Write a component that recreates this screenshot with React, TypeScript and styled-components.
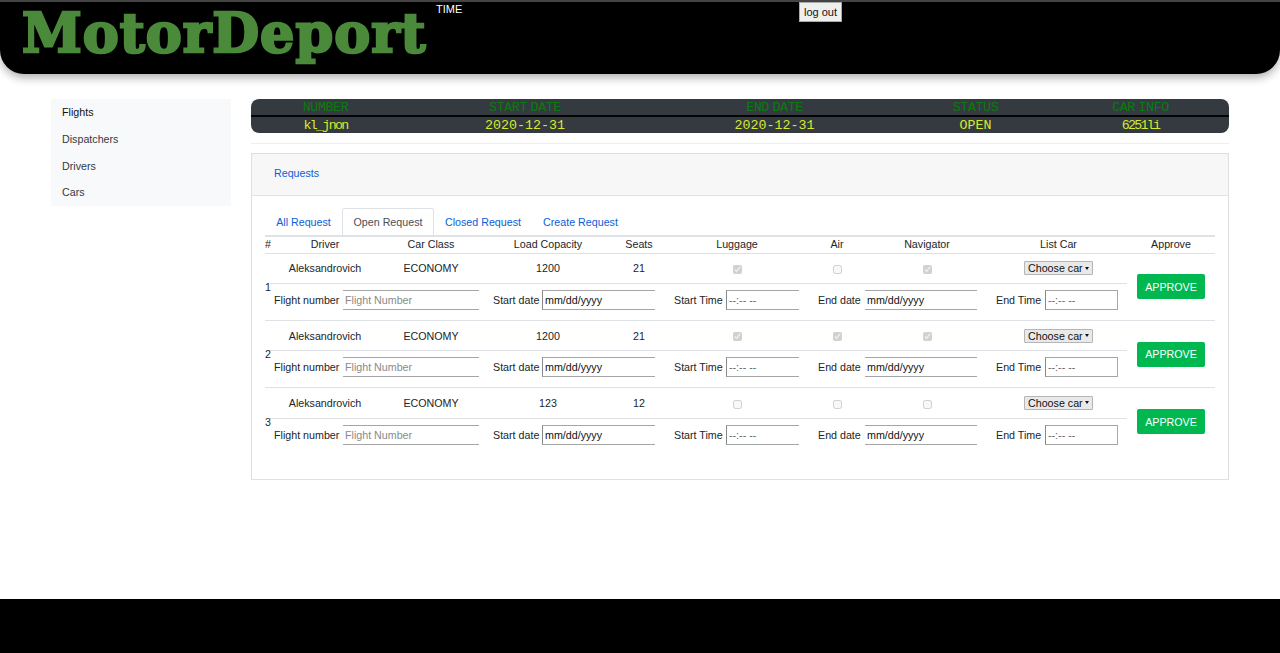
import React from 'react';
import styled, { createGlobalStyle } from 'styled-components';

const GlobalStyle = createGlobalStyle`
  html, body {
    margin: 0;
    padding: 0;
    background: #fff;
  }
  body {
    font-family: "Liberation Sans", Arial, sans-serif;
    font-size: 10.7px;
    color: #212529;
  }
`;

const Page = styled.div`
  min-height: 653px;
  display: flex;
  flex-direction: column;
  overflow: hidden;
`;

const Header = styled.header`
  height: 72px;
  background: #000;
  border-top: 2px solid #444;
  border-radius: 0 0 24px 24px;
  box-shadow: 0 4px 8px rgba(0, 0, 0, 0.3);
  display: flex;
  align-items: flex-start;
`;

const Logo = styled.div`
  width: 414px;
  margin-left: 22px;
  font-family: "DejaVu Serif", serif;
  font-weight: 700;
  font-size: 54px;
  line-height: 62px;
  letter-spacing: 1px;
  color: #4a8a3a;
  -webkit-text-stroke: 2.5px #4a8a3a;
  white-space: nowrap;
`;

const TimeLabel = styled.div`
  width: 363px;
  margin-top: 1px;
  color: #fff;
  font-size: 11px;
  line-height: 13px;
`;

const LogoutButton = styled.button`
  width: 43px;
  height: 20px;
  padding: 0;
  background: #efefef;
  border: 1px solid #aaa;
  color: #111;
  font-family: inherit;
  font-size: 11px;
`;

const Main = styled.main`
  display: flex;
  align-items: flex-start;
  gap: 20px;
  padding: 25px 51px 0;
`;

const Sidebar = styled.nav`
  width: 180px;
  flex: none;
  background: #f8f9fa;
`;

const SideItem = styled.div<{ $active?: boolean }>`
  height: 26.75px;
  line-height: 26.5px;
  padding-left: 11px;
  color: ${p => (p.$active ? '#111' : '#343a40')};
`;

const Content = styled.section`
  width: 978px;
  flex: none;
`;

const Ticker = styled.div`
  height: 34px;
  background: #343a40;
  border-radius: 8px;
  overflow: hidden;
  font-family: "Liberation Mono", monospace;
  font-size: 13.3px;
`;

const TickerHead = styled.div`
  height: 18px;
  line-height: 17px;
  display: grid;
  grid-template-columns: 149px 250px 249px 153px 177px;
  text-align: center;
  letter-spacing: -0.4px;
  word-spacing: -4px;
  color: #0b7a12;
  border-bottom: 2px solid #050505;
  box-sizing: border-box;
`;

const TickerRow = styled.div`
  height: 16px;
  line-height: 17px;
  display: grid;
  grid-template-columns: 149px 250px 249px 153px 177px;
  text-align: center;
  color: #d6ea2e;
`;

const Narrow = styled.span`
  letter-spacing: -1.7px;
`;

const Divider = styled.hr`
  margin: 10px 0 9px;
  border: 0;
  border-top: 1px solid #eee;
`;

const Panel = styled.div`
  border: 1px solid #dfdfdf;
  height: 327px;
  box-sizing: border-box;
`;

const PanelHead = styled.div`
  height: 42px;
  line-height: 39px;
  padding-left: 22px;
  background: #f7f7f7;
  border-bottom: 1px solid #e2e2e2;
  box-sizing: border-box;
  color: #0b5ed7;
`;

const PanelBody = styled.div`
  padding: 12px 13px 0;
`;

const Tabs = styled.div`
  display: flex;
  height: 29px;
  border-bottom: 2px solid #dee2e6;
  box-sizing: border-box;
`;

const Tab = styled.div<{ $active?: boolean; $width: number }>`
  width: ${p => p.$width}px;
  height: 27px;
  box-sizing: border-box;
  text-align: center;
  line-height: 26px;
  color: ${p => (p.$active ? '#495057' : '#0b5ed7')};
  background: #fff;
  border: 1px solid ${p => (p.$active ? '#dee2e6' : 'transparent')};
  border-bottom: 0;
  border-radius: 3px 3px 0 0;
`;

const Table = styled.table`
  width: 950px;
  table-layout: fixed;
  border-collapse: collapse;
  font-size: 10.7px;
`;

const Th = styled.th`
  height: 16px;
  padding: 0 0 2px;
  box-sizing: border-box;
  font-weight: 400;
  text-align: center;
  color: #212529;
  border-bottom: 1px solid #dee2e6;
`;

const HashTh = styled(Th)`
  text-align: left;
`;

const Td = styled.td`
  height: 30.4px;
  padding: 0;
  box-sizing: border-box;
  text-align: center;
  color: #212529;
`;

const IndexCell = styled(Td)`
  text-align: left;
`;

const Row = styled.tr`
  border-top: 1px solid #dee2e6;
`;

const FieldsCell = styled.td`
  height: 37px;
  padding: 0 0 4px 4px;
  box-sizing: border-box;
  border-top: 1px solid #dee2e6;
`;

const Fields = styled.div`
  display: grid;
  grid-template-columns: 219px 181px 144px 178px 122px;
`;

const Field = styled.label<{ $width: number }>`
  width: ${p => p.$width}px;
  display: flex;
  align-items: center;
  justify-content: space-between;
  white-space: nowrap;
`;

const TextInput = styled.input<{ $width: number; $edge?: 'left' | 'box' }>`
  width: ${p => p.$width}px;
  height: 20px;
  box-sizing: border-box;
  padding: 0 2px;
  background: #fff;
  font-family: inherit;
  font-size: 10.7px;
  color: #111;
  outline: none;
  border: 0;
  border-top: 1px solid #a5a5a5;
  border-bottom: 1px solid #a5a5a5;
  border-left: ${p => (p.$edge ? '1px solid #888' : '0')};
  border-right: ${p => (p.$edge === 'box' ? '1px solid #aaa' : '0')};
  &::placeholder {
    color: #8a8a8a;
  }
`;

const TimeInput = styled(TextInput)`
  color: #666;
`;

const Check = styled.input`
  width: 9px;
  height: 9px;
  margin: 0;
  vertical-align: middle;
`;

const CarSelect = styled.button`
  width: 69px;
  height: 14px;
  padding: 0 0 0 3px;
  display: inline-flex;
  align-items: center;
  justify-content: space-between;
  white-space: nowrap;
  background: #e9e9e9;
  border: 1px solid #b5b5b5;
  border-radius: 1px;
  color: #111;
  font-family: inherit;
  font-size: 10.7px;
`;

const Caret = styled.span`
  width: 0;
  height: 0;
  margin-right: 3px;
  border-left: 2px solid transparent;
  border-right: 2px solid transparent;
  border-top: 3px solid #111;
`;

const ApproveButton = styled.button`
  display: block;
  width: 68px;
  height: 25px;
  margin-left: 10px;
  padding: 0;
  background: #00b84f;
  border: 0;
  border-radius: 2px;
  color: #fff;
  font-family: inherit;
  font-size: 10.7px;
`;

const Footer = styled.footer`
  margin-top: auto;
  height: 54px;
  background: #000;
`;

const requests = [
  { load: '1200', seats: '21', luggage: true, air: false, navigator: true },
  { load: '1200', seats: '21', luggage: true, air: true, navigator: true },
  { load: '123', seats: '12', luggage: false, air: false, navigator: false },
];

const App: React.FC = () => {
  return (
    <Page>
      <GlobalStyle />
      <Header>
        <Logo>MotorDeport</Logo>
        <TimeLabel>TIME</TimeLabel>
        <LogoutButton>log out</LogoutButton>
      </Header>

      <Main>
        <Sidebar>
          <SideItem $active>Flights</SideItem>
          <SideItem>Dispatchers</SideItem>
          <SideItem>Drivers</SideItem>
          <SideItem>Cars</SideItem>
        </Sidebar>

        <Content>
          <Ticker>
            <TickerHead>
              <span>NUMBER</span>
              <span>START DATE</span>
              <span>END DATE</span>
              <span>STATUS</span>
              <span>CAR INFO</span>
            </TickerHead>
            <TickerRow>
              <Narrow>kl_jnon</Narrow>
              <span>2020-12-31</span>
              <span>2020-12-31</span>
              <span>OPEN</span>
              <Narrow>6251li</Narrow>
            </TickerRow>
          </Ticker>

          <Divider />

          <Panel>
            <PanelHead>Requests</PanelHead>
            <PanelBody>
              <Tabs>
                <Tab $width={77}>All Request</Tab>
                <Tab $width={92} $active>Open Request</Tab>
                <Tab $width={98}>Closed Request</Tab>
                <Tab $width={97}>Create Request</Tab>
              </Tabs>
              <Table>
                <colgroup>
                  <col width={5} />
                  <col width={110} />
                  <col width={102} />
                  <col width={132} />
                  <col width={50} />
                  <col width={146} />
                  <col width={54} />
                  <col width={126} />
                  <col width={137} />
                  <col width={88} />
                </colgroup>
                <thead>
                  <tr>
                    <HashTh>#</HashTh>
                    <Th>Driver</Th>
                    <Th>Car Class</Th>
                    <Th>Load Copacity</Th>
                    <Th>Seats</Th>
                    <Th>Luggage</Th>
                    <Th>Air</Th>
                    <Th>Navigator</Th>
                    <Th>List Car</Th>
                    <Th>Approve</Th>
                  </tr>
                </thead>
                <tbody>
                  {requests.map((r, i) => (
                    <React.Fragment key={i}>
                      <Row>
                        <IndexCell rowSpan={2}>{i + 1}</IndexCell>
                        <Td>Aleksandrovich</Td>
                        <Td>ECONOMY</Td>
                        <Td>{r.load}</Td>
                        <Td>{r.seats}</Td>
                        <Td><Check type="checkbox" disabled checked={r.luggage} readOnly /></Td>
                        <Td><Check type="checkbox" disabled checked={r.air} readOnly /></Td>
                        <Td><Check type="checkbox" disabled checked={r.navigator} readOnly /></Td>
                        <Td>
                          <CarSelect>Choose car<Caret /></CarSelect>
                        </Td>
                        <Td rowSpan={2}><ApproveButton>APPROVE</ApproveButton></Td>
                      </Row>
                      <tr>
                        <FieldsCell colSpan={8}>
                          <Fields>
                            <Field $width={205}>
                              Flight number
                              <TextInput $width={136} placeholder="Flight Number" />
                            </Field>
                            <Field $width={162}>
                              Start date
                              <TextInput $width={113} $edge="left" defaultValue="mm/dd/yyyy" />
                            </Field>
                            <Field $width={125}>
                              Start Time
                              <TimeInput $width={73} $edge="left" defaultValue="--:-- --" />
                            </Field>
                            <Field $width={159}>
                              End date
                              <TextInput $width={112} defaultValue="mm/dd/yyyy" />
                            </Field>
                            <Field $width={122}>
                              End Time
                              <TimeInput $width={73} $edge="box" defaultValue="--:-- --" />
                            </Field>
                          </Fields>
                        </FieldsCell>
                      </tr>
                    </React.Fragment>
                  ))}
                </tbody>
              </Table>
            </PanelBody>
          </Panel>
        </Content>
      </Main>

      <Footer />
    </Page>
  );
};

export default App;
